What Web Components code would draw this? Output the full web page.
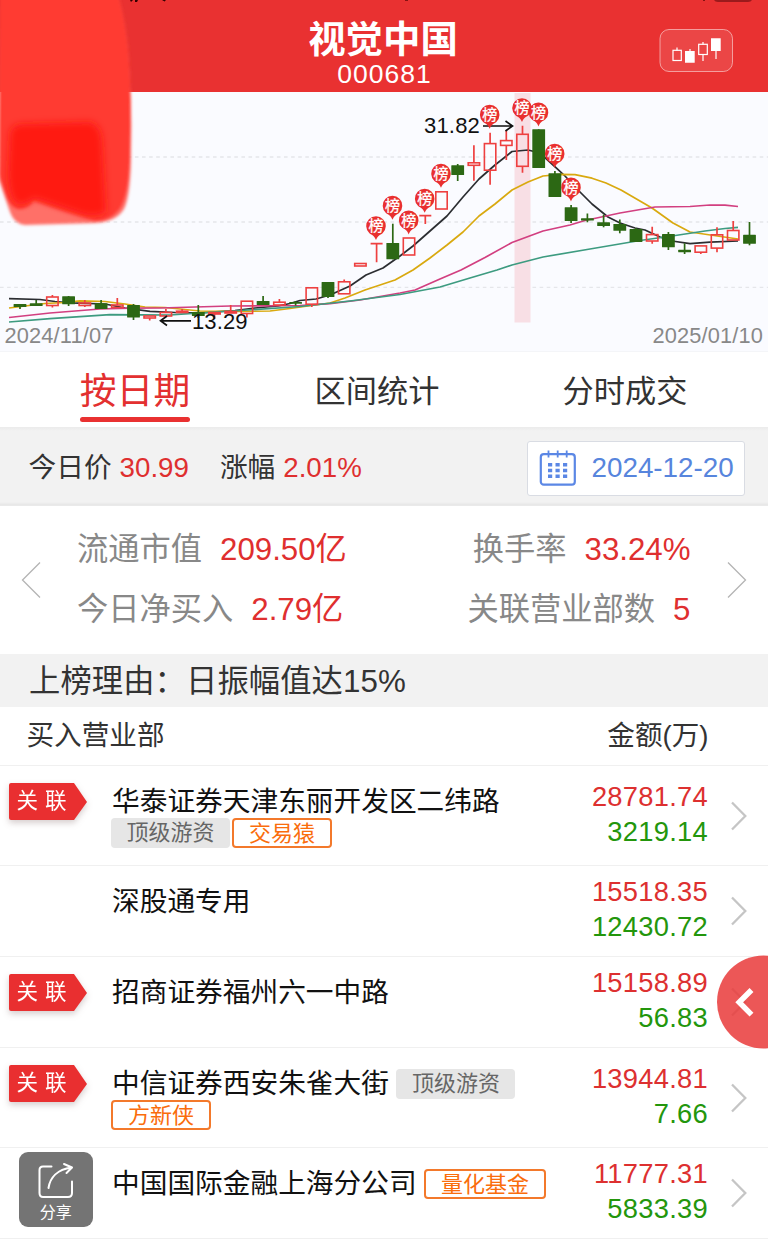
<!DOCTYPE html>
<html lang="zh-CN">
<head>
<meta charset="utf-8">
<title>视觉中国 000681</title>
<style>
html,body{margin:0;padding:0}
body{width:768px;height:1240px;overflow:hidden;background:#fff;color:#333;font-family:"Liberation Sans","Noto Sans CJK SC",sans-serif}
</style>
</head>
<body>
<stock-page></stock-page>
<script>
function define(name, render){
  customElements.define(name, class extends HTMLElement{
    constructor(){super();this.attachShadow({mode:'open'});}
    connectedCallback(){this.shadowRoot.innerHTML=render(this);}
  });
}

define('stock-header',()=>`
<style>
:host{display:flex;height:91.5px;background:#e93131;color:#fff;position:relative;justify-content:center}
.title{display:flex;flex-direction:column;align-items:center;padding-top:20px;white-space:nowrap}
.name{font-size:37.4px;line-height:40px;font-weight:700;margin-right:2px}
.code{font-size:26.5px;line-height:30px;letter-spacing:1.05px;padding-left:1px;margin-top:-1px}
.kbtn{position:absolute;left:659px;top:29px;width:75px;height:43px}
.bits{position:absolute;left:0;top:0}
</style>
<svg class="bits" width="768" height="4"><path d="M130 0h3l-2 2zM135 0h3l-1 2h-2zM162 0h4l-1.500 1.500z" fill="#300"/><path d="M405 0h3v1h-3zM703 0h2v1h-2z" fill="#811"/><path d="M714 0h38q-1 2-4 2h-30q-3 0-4-2z" fill="#9b1a1c"/></svg>
<div class="title"><div class="name"><slot name="name"></slot></div><div class="code"><slot name="code"></slot></div></div>
<svg class="kbtn" viewBox="659 29 75 43"><rect x="660" y="29.500" width="72.500" height="42" rx="9" fill="#fff" fill-opacity=".1" stroke="#fff" stroke-opacity=".5"/>
<g stroke="#fff" stroke-width="1.200" fill="none"><path d="M677 47.500V50.500M690 49v3M703 42v2.500M703 55v6M716 51v8"/><rect x="673" y="50.300" width="8.300" height="10.200"/><rect x="698.700" y="44.300" width="8.600" height="10.200"/></g><path d="M685 51h9.700v11.700H685zM711 38.300h9.700V51H711z" fill="#fff"/></svg>`);

define('k-chart',()=>{
  const R=1,G=0;
  // kind, body top, body bottom, high, low
  const rows=[[G,304,307,304,309],[G,303.3,306,300,306],[R,297,305.5,295,307.5],[G,296.3,304.3,296,306],[R,303,305.5,300,307],[G,303.3,309,300,309],[R,305,307.5,298,308],[G,305,317.5,304,320],[R,316,318,316,320.5],[R,312.5,316,309,316],[R,311.2,312.5,309,313],[G,312,316,305,318],[R,312.6,314,312,319],[R,311.5,313,305,313],[R,301.2,313.5,301,317.5],[G,301,305,296,305],[R,302.2,305,299,305],[G,302,303.7,301,305.5],[R,287.8,304.2,287.8,307],[G,282,297,282,298],[R,281.8,293.8,279.5,294],[R,263.5,266,263.5,266],[2,243.7,243.7,243.7,262.3],[G,243,259.3,223.7,259.3],[R,238,255,238,255],[2,215.7,215.7,215.7,224],[R,191.8,209,191.8,209],[G,165.3,175,164,181],[R,162.8,165.3,145.3,180.7],[R,143.6,170.2,132.7,184.7],[R,140.6,145.4,130,160],[R,134.3,166.3,125.7,172.7],[G,129.3,168,129.3,168],[G,173.3,197,171,197],[G,207.3,220.9,205,223],[G,218.3,220.5,213.5,222.3],[G,222.3,226,214.7,227.3],[G,224,230.7,219.5,233.3],[G,229,242,228,242],[R,234.6,241,226.7,243.7],[G,234,247.3,232,250],[G,249.7,252.3,243.3,254],[R,245.9,252.2,245.9,254],[R,234.8,248.1,227.3,252.3],[R,230.5,240,221,240],[G,234.7,243.7,222,245.3]];
  const red='#ee4040',green='#2c6814';
  const candles=rows.map(([k,t,b,h,l],i)=>{
    const x=+(20+i*16.21).toFixed(1);
    if(k===2)return `<path d="M${x-6} ${t}h12M${x} ${t}V${l}" stroke="${red}" stroke-width="1.7" fill="none"/>`;
    if(k===R)return `<path d="M${x} ${h}V${t}M${x} ${b}V${l}" stroke="${red}" stroke-width="1.7"/><rect x="${x-5.7}" y="${t}" width="11.4" height="${+(b-t).toFixed(1)}" fill="none" stroke="${red}" stroke-width="1.6"/>`;
    return `<path d="M${x} ${h}V${l}" stroke="${green}" stroke-width="1.7"/><rect x="${x-6.4}" y="${t}" width="12.8" height="${+(b-t).toFixed(1)}" rx=".5" fill="${green}"/>`;
  }).join('');
  const marks=[[376,216.3],[392.5,196],[408.7,210.7],[424.7,189],[441,164],[489.7,105],[522,98.3],[538.5,102.7],[554.7,144],[571,177.7]].map(([x,y])=>
   `<g transform="translate(${x} ${y})"><path d="M0 23.700C-1.500 19.500-4 18.700-6.600 16.900A9.800 9.800 0 1 1 6.600 16.900C4 18.700 1.500 19.500 0 23.700Z" fill="#e92f2f"/><text y="15" text-anchor="middle" font-size="15" fill="#fff" stroke="#fff" stroke-width=".3">榜</text></g>`).join('');
  return `
<style>:host{display:block;height:260.5px;background:#fafbff}svg{display:block;font-family:"Liberation Sans","Noto Sans CJK SC",sans-serif}</style>
<svg width="768" height="260.500" viewBox="0 92 768 260.500">
<path d="M0 352H768" stroke="#eeeef1"/>
<path d="M0 157H768M0 222H768M0 287.300H768" stroke="#e5e6ea" stroke-width="1.300" stroke-dasharray="3.600 3.500"/>
<rect x="514.500" y="93" width="16" height="229.500" fill="#f8dfe5"/>
<g fill="none" stroke-width="1.700" stroke-linejoin="round">
<path stroke="#2b2d31" d="M9 298.700L40 299.500 55 301.500 70 302.800 105 304 125 308 150 311.300 175 312.500 200 312.800 235 310.500 255 308 278 306 290 303.500 300 300.500 316 299 330 295 350 286 366 275 383 268 400 256 413 246 430 231 447 216 463 197 479 179 495 165 512 151.500 528 150 540 153 552 164 565 176 578 190 592 204 608 217 620 223 635 228 645 230 660 237 672 241 690 243.700 710 242.200 738 241"/>
<path stroke="#d9a90f" d="M9 308L25 306 45 303.500 65 302.500 80 300.800 105 301.500 125 304 145 307 165 307.500 200 311 240 311.500 270 311 290 308.500 315 305 330 303 345 298 365 290 395 280 413 270 430 258 447 245 463 232 479 216 495 204 512 190 528 182 543 176 560 174.300 575 174.700 592 178.200 606 183 621 190 652 208 673 223 690 232 707 234.500 738 239"/>
<path stroke="#d23f80" d="M9 317.500L50 313 100 309 130 308.200 160 308 230 306 300 305.500 330 303.700 360 300 400 293 415 290 440 279 461 270 485 257.500 512 242.500 543 231 570 225 585 220.500 620 213 655 207 690 206.500 710 205 725 205.200 738 206.500"/>
<path stroke="#3d9b80" d="M9 322L50 318.700 110 314.700 170 315 200 313 240 310.500 300 306.500 350 301 400 294.500 440 287 470 278 497 270 512 265 543 257 590 249 640 240.500 672 236 705 231 725 228.500 738 227.300"/>
</g>${candles}
<g fill="none" stroke="#111" stroke-width="1.700"><path d="M483 126H512M505.500 121L512.500 126 505.500 131M191 320.800H160.500M167 316L160.500 320.800 167 325.500"/></g>
<text x="424" y="133" font-size="22" letter-spacing=".200" fill="#111">31.82</text>
<text x="192" y="328.700" font-size="22" letter-spacing=".100" fill="#111">13.29</text>
<text x="4.500" y="343" font-size="21.800" letter-spacing=".150" fill="#888">2024/11/07</text>
<text x="652.500" y="343" font-size="21.800" letter-spacing=".150" fill="#888">2025/01/10</text>
${marks}</svg>`;});

define('tab-item',()=>`
<style>
:host{display:flex;justify-content:center;align-items:flex-start;flex:none;font-size:31.2px;line-height:79px;white-space:nowrap;color:#333}
span{display:block;height:75px;position:relative}
:host([active]){font-size:36.8px;line-height:80px;color:#e33030}
:host([active]) span::after{content:"";position:absolute;left:0;right:0;top:64.500px;height:5.500px;border-radius:3px;background:#e93131}
</style><span><slot></slot></span>`);
define('tab-bar',()=>`<style>:host{display:grid;grid-template-columns:270px 214px 1fr;padding-right:2px;height:75px;background:#fff}</style><slot></slot>`);

define('price-bar',()=>`
<style>
:host{display:flex;align-items:center;height:79px;box-sizing:border-box;padding:3px 23px 0 28.5px;background:linear-gradient(#ebebeb 0,#f2f2f2 4px,#f2f2f2 75px,#e6e6e6 78px,#eee);font-size:27.7px;line-height:40px;white-space:nowrap}
b{font-weight:400;color:#df2f2f;margin-left:8px}
.a{margin-right:31px}
.date{margin-left:auto;box-sizing:border-box;width:218px;height:55px;border:1.5px solid #d9dce3;border-radius:3px;background:#fff;display:flex;align-items:center;padding-left:11px;gap:14.5px;color:#5785dd;font-size:27.8px}
svg{flex:none}
</style>
<span class="a">今日价<b>30.99</b></span><span>涨幅<b>2.01%</b></span>
<div class="date"><svg width="38" height="38" viewBox="0 0 38 38"><rect x="1.800" y="5.200" width="34" height="30.500" rx="3" fill="none" stroke="#5b87e5" stroke-width="2.200"/><path d="M9.500 1.500v7M18.700 1.500v7M27.700 1.500v7" stroke="#5b87e5" stroke-width="1.800"/><path fill="#5b87e5" d="M9 14h4.200v3.400H9zM16.500 14h4.200v3.400h-4.200zM24 14h4.200v3.400H24zM9 19.800h4.200v3.400H9zM16.500 19.800h4.200v3.400h-4.200zM24 19.800h4.200v3.400H24zM9 25.600h4.200V29H9zM16.500 25.600h4.200V29h-4.200zM24 25.600h4.200V29H24z"/></svg><span>2024-12-20</span></div>`);

define('stat-item',el=>`<style>:host{display:flex;font-size:31.25px;line-height:60px;color:#888;white-space:nowrap}b{font-weight:400;color:#df2f2f;margin-left:18px}</style><span>${el.getAttribute('label')}</span><b><slot></slot></b>`);
define('stat-panel',()=>`
<style>
:host{display:flex;align-items:center;height:148px;box-sizing:border-box;padding:0 21px;background:#fff}
.g{flex:1;display:grid;grid-template-columns:1fr auto;padding:0 36.500px 0 36px}
.l{display:flex;flex-direction:column}.r{display:flex;flex-direction:column;align-items:flex-end}
</style>
<svg width="20" height="38" viewBox="0 0 20 38"><path d="M19 1.500L1.500 19 19 36.500" fill="none" stroke="#b4b4b4" stroke-width="1.300"/></svg>
<div class="g"><div class="l"><slot name="l"></slot></div><div class="r"><slot name="r"></slot></div></div>
<svg width="20" height="38" viewBox="0 0 20 38"><path d="M1 1.500L18.500 19 1 36.500" fill="none" stroke="#b4b4b4" stroke-width="1.300"/></svg>`);

define('reason-bar',()=>`<style>:host{display:block;height:53px;background:#f2f2f2;padding-left:29px;font-size:31.300px;letter-spacing:.1px;line-height:55px;white-space:nowrap;color:#333}</style><slot></slot>`);
define('table-head',()=>`<style>:host{display:flex;justify-content:space-between;box-sizing:border-box;height:59px;border-bottom:1.500px solid #f0f0f0;padding:0 59.500px 0 26.500px;font-size:27.600px;line-height:58px;color:#333}</style><slot></slot>`);

define('tag-chip',()=>`<style>:host{display:inline-flex;justify-content:center;box-sizing:border-box;min-width:100px;height:29.500px;border-radius:4px;padding:0 15.500px;font-size:22px;line-height:30px;background:#e6e6e6;color:#666}:host([hot]){background:#fff;border:2px solid #f3792b;color:#fa6d0c;line-height:27px;padding:0 15px}</style><slot></slot>`);

define('relation-flag',()=>`<style>:host{display:block;width:78px;height:37px;filter:drop-shadow(0 3px 3px rgba(90,60,60,.25))}div{height:37px;background:#e92f30;clip-path:polygon(0 2px,.600px .600px,2px 0,65px 0,78px 19px,65px 37px,2px 37px,.600px 36.400px,0 35px);color:#fff;font-size:21.500px;letter-spacing:7px;line-height:37px;padding-left:7.500px;white-space:nowrap}</style><div>关联</div>`);

define('broker-row',el=>`
<style>
:host{display:grid;grid-template-columns:112px 1fr auto 60px;height:91px;box-sizing:border-box;border-bottom:1.500px solid #f0f0f0;color:#111}
:host([tall]){height:100px}
relation-flag{margin:17px 0 0 9px}
.n{padding-top:19px;font-size:27.700px;line-height:34px;white-space:nowrap}
.line{display:flex;align-items:center;gap:7.5px}
.tags{display:flex;gap:2px;margin-left:-1px;margin-top:-1px}
.amt{text-align:right;font-size:27.300px;line-height:35px;padding-top:8px;letter-spacing:.280px}
:host([tall]) .amt{padding-top:13px}
.b{color:#dd3030}.s{color:#23960c}
.go{display:flex;align-items:center;padding-left:23px}
</style>
<div>${el.hasAttribute('linked')?'<relation-flag></relation-flag>':''}</div>
<div class="n"><div class="line"><slot></slot><slot name="side"></slot></div><div class="tags"><slot name="tags"></slot></div></div>
<div class="amt"><div class="b">${el.getAttribute('buy')}</div><div class="s">${el.getAttribute('sell')}</div></div>
<div class="go"><svg width="16" height="30" viewBox="0 0 16 30"><path d="M1 1.500L14.300 15 1 28.500" fill="none" stroke="#c5c5c5" stroke-width="2.300"/></svg></div>`);

define('side-toggle',()=>`<style>:host{position:absolute;left:717px;top:955px;width:51px;height:94px}svg{display:block}</style><svg width="51" height="94" viewBox="717 955 51 94"><circle cx="763.500" cy="1002" r="46.500" fill="#e93b3b" fill-opacity=".860"/><path d="M751.500 990L739.200 1002.300 751.500 1014.600" fill="none" stroke="#fff" stroke-width="5.500"/></svg>`);
define('share-button',()=>`<style>:host{position:absolute;left:18.500px;top:1152px;width:74.500px;height:74.500px;border-radius:9px;background:#747474;color:#fff;display:flex;flex-direction:column;align-items:center;font-size:16px;line-height:22px}svg{margin-top:8.5px;flex:none}span{margin-top:1.5px}</style><svg width="38" height="40" viewBox="0 0 38 40"><g fill="none" stroke="#fff" stroke-width="2" stroke-linecap="round" stroke-linejoin="round"><path d="M14.500 5.500H6Q2.500 5.500 2.500 9V32Q2.500 36 6 36H31Q35 36 35 32V20.500"/><path d="M11.500 27C13 17 20 8.500 34.500 6.500M27 3L35 6.500 29.500 12"/></g></svg><span>分享</span>`);

define('redaction-mark',()=>`<style>:host{position:absolute;left:0;top:0;width:140px;height:235px}svg{display:block}</style>
<svg width="140" height="235"><defs><filter id="a" x="-20%" y="-10%" width="140%" height="120%"><feGaussianBlur stdDeviation="1.800"/></filter><filter id="b" x="-20%" y="-20%" width="140%" height="140%"><feGaussianBlur stdDeviation="3.500"/></filter></defs>
<g filter="url(#a)"><path d="M0-5H118Q125 20 128 50Q132 100 131 150Q131 195 124 209Q116 222 95 223L25 225Q14 224 10 212L-1 180Z" fill="#ff6f68"/><path d="M0-5H118Q125 20 128 50Q132 100 130 150Q130 190 121 207Q112 221 95 221Q60 211 34 201Q26 211 17 209Q9 206 5 193L-1 175Z" fill="#ff3a30"/></g>
<path filter="url(#b)" d="M10 136Q10 124 24 124L90 122Q101 125 102 142L106 212Q96 218 82 214L34 198Q26 206 17 204Q9 198 8 175Z" fill="#ff160f" opacity=".88"/></svg>`);

define('stock-page',()=>`
<style>:host{display:block;position:relative;width:768px;height:1240px;overflow:hidden;background:#fff}</style>
<stock-header><span slot="name">视觉中国</span><span slot="code">000681</span></stock-header>
<k-chart></k-chart>
<tab-bar><tab-item active>按日期</tab-item><tab-item>区间统计</tab-item><tab-item>分时成交</tab-item></tab-bar>
<price-bar></price-bar>
<stat-panel><stat-item slot="l" label="流通市值">209.50亿</stat-item><stat-item slot="l" label="今日净买入">2.79亿</stat-item><stat-item slot="r" label="换手率">33.24%</stat-item><stat-item slot="r" label="关联营业部数">5</stat-item></stat-panel>
<reason-bar>上榜理由：日振幅值达15%</reason-bar>
<table-head><span>买入营业部</span><span>金额(万)</span></table-head>
<broker-row linked tall buy="28781.74" sell="3219.14"><span>华泰证券天津东丽开发区二纬路</span><tag-chip slot="tags">顶级游资</tag-chip><tag-chip slot="tags" hot>交易猿</tag-chip></broker-row>
<broker-row buy="15518.35" sell="12430.72"><span>深股通专用</span></broker-row>
<broker-row linked buy="15158.89" sell="56.83"><span>招商证券福州六一中路</span></broker-row>
<broker-row linked tall buy="13944.81" sell="7.66"><span>中信证券西安朱雀大街</span><tag-chip slot="side">顶级游资</tag-chip><tag-chip slot="tags" hot>方新侠</tag-chip></broker-row>
<broker-row buy="11777.31" sell="5833.39"><span>中国国际金融上海分公司</span><tag-chip slot="side" hot>量化基金</tag-chip></broker-row>
<redaction-mark></redaction-mark><side-toggle></side-toggle><share-button></share-button>`);
</script>
</body>
</html>
